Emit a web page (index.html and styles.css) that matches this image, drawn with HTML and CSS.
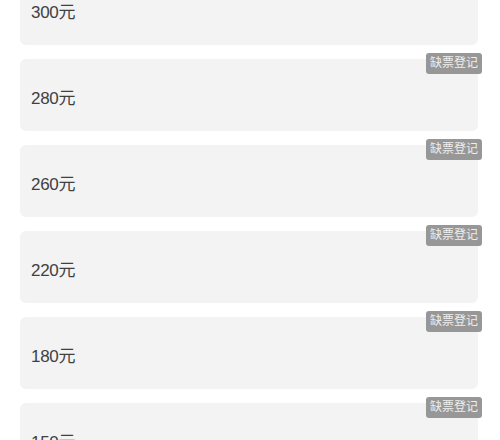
FILE: index.html
```html
<!DOCTYPE html>
<html lang="zh-CN">
<head>
  <meta charset="UTF-8">
  <title>票档</title>
  <link rel="stylesheet" href="styles.css">
</head>
<body>
  <div class="price-list">
    <div class="price-item"><span class="price">300元</span></div>
    <div class="price-item"><span class="price">280元</span><span class="tag">缺票登记</span></div>
    <div class="price-item"><span class="price">260元</span><span class="tag">缺票登记</span></div>
    <div class="price-item"><span class="price">220元</span><span class="tag">缺票登记</span></div>
    <div class="price-item"><span class="price">180元</span><span class="tag">缺票登记</span></div>
    <div class="price-item"><span class="price">150元</span><span class="tag">缺票登记</span></div>
  </div>
</body>
</html>
```

FILE: styles.css
```css
body {
  margin: 0;
  background: #fff;
  font-family: "Liberation Sans", "Noto Sans CJK SC", sans-serif;
  overflow: hidden;
}
.price-list {
  display: flex;
  flex-direction: column;
  gap: 14px;
  margin-top: -27px;
  padding: 0 22px 0 20px;
}
.price-item {
  position: relative;
  display: flex;
  align-items: center;
  height: 72px;
  box-sizing: border-box;
  padding: 3px 11px 0;
  background: #f3f3f3;
  border-radius: 6px;
}
.price {
  font-size: 17px;
  color: #404040;
  letter-spacing: -0.3px;
}
.tag {
  position: absolute;
  top: -6px;
  right: -4px;
  height: 21px;
  line-height: 21px;
  padding: 0 4px;
  font-size: 12px;
  color: #eee;
  background: #979797;
  border-radius: 3px;
}
```
